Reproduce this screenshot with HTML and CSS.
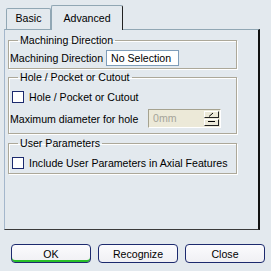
FILE: index.html
```html
<!DOCTYPE html>
<html>
<head>
<meta charset="utf-8">
<link rel="stylesheet" href="styles.css">
</head>
<body>
<div class="dialog">
  <div class="tabs">
    <div class="tab">Basic</div>
    <div class="tab active">Advanced</div>
  </div>
  <div class="panel">
    <fieldset class="group g1">
      <legend>Machining Direction</legend>
      <div class="row">
        <span class="label">Machining Direction</span>
        <span class="textbox">No Selection</span>
      </div>
    </fieldset>
    <fieldset class="group g2">
      <legend>Hole / Pocket or Cutout</legend>
      <label class="check"><span class="box"></span><span>Hole / Pocket or Cutout</span></label>
      <div class="row row-spin">
        <span class="label">Maximum diameter for hole</span>
        <span class="spin">
          <span class="spin-val">0mm</span>
          <span class="spin-btns">
            <span class="sbtn"><svg width="9" height="5" viewBox="0 0 9 5"><path d="M2 4.5 L6 1" stroke="#000" stroke-width="1"/></svg></span>
            <span class="sbtn"><svg width="9" height="5" viewBox="0 0 9 5"><path d="M1 1.5 H8" stroke="#000" stroke-width="1"/></svg></span>
          </span>
        </span>
      </div>
    </fieldset>
    <fieldset class="group g3">
      <legend>User Parameters</legend>
      <label class="check"><span class="box"></span><span>Include User Parameters in Axial Features</span></label>
    </fieldset>
  </div>
  <div class="buttons">
    <button class="btn default">OK</button>
    <button class="btn">Recognize</button>
    <button class="btn">Close</button>
  </div>
</div>
</body>
</html>
```
FILE: styles.css
```css
html, body {
  margin: 0;
  padding: 0;
  background: #e3e9ee;
}
body {
  width: 271px;
  height: 271px;
  overflow: hidden;
  font-family: "Liberation Sans", Arial, sans-serif;
  font-size: 10.6px;
  color: #000;
}
.dialog {
  padding: 5px 0 0 4px;
}
.tabs {
  display: flex;
  align-items: flex-end;
  padding-left: 2px;
  height: 24px;
  position: relative;
  z-index: 1;
}
.tab {
  box-sizing: border-box;
  height: 21px;
  width: 45px;
  border: 1px solid #91a7b4;
  border-bottom: none;
  border-radius: 2px 2px 0 0;
  text-align: center;
  line-height: 19px;
  background: #e3e9ee;
}
.tab.active {
  height: 25px;
  width: 72px;
  margin-bottom: -1px;
  border-right: 1px solid #222;
  line-height: 24px;
}
.panel {
  box-sizing: border-box;
  width: 256px;
  height: 201px;
  border-top: 1px solid #91a7b4;
  border-left: 1px solid #a4b7cc;
  border-right: 2px solid #111;
  border-bottom: 1px solid #3a3a3a;
  padding: 4px 0 0 3px;
}
.group {
  box-sizing: border-box;
  width: 229px;
  margin: 0 0 2px 0;
  padding: 0 0 0 1px;
  border: 1px solid #aca899;
  box-shadow: inset 1px 1px 0 #fff, 1px 1px 0 #fff;
  min-width: 0;
}
.group legend {
  padding: 0 2px;
  margin-left: 8px;
  line-height: 13px;
}
.g1 { height: 35px; }
.g2 { height: 63px; margin-top: 0; }
.g3 { height: 37px; margin-top: 3px; }
.row {
  display: flex;
  align-items: center;
  height: 16px;
  margin-top: 3px;
}
.label {
  width: 96px;
  white-space: nowrap;
}
.textbox {
  box-sizing: border-box;
  width: 73px;
  height: 16px;
  border: 1px solid #7f9db9;
  background: #fff;
  padding-left: 4px;
  line-height: 14px;
}
.check {
  display: flex;
  align-items: center;
  gap: 5px;
  margin-top: 7px;
  margin-left: 2px;
  white-space: nowrap;
}
.box {
  box-sizing: border-box;
  width: 12px;
  height: 12px;
  border: 1px solid #1c2a6e;
  background: #fff;
  flex: none;
}
.row-spin {
  height: 19px;
  margin-top: 6px;
}
.row-spin .label {
  width: 138px;
}
.spin {
  box-sizing: border-box;
  display: flex;
  width: 73px;
  height: 19px;
  border: 1px solid #a5a28f;
  border-right-color: #fff;
  border-bottom-color: #fff;
  background: #ece9d8;
  padding: 1px;
}
.spin-val {
  flex: 1;
  color: #a6a49a;
  padding-left: 3px;
  line-height: 15px;
}
.spin-btns {
  display: flex;
  flex-direction: column;
  width: 15px;
  gap: 1px;
}
.sbtn {
  flex: 1;
  box-sizing: border-box;
  border: 1px solid #222;
  border-top-color: #fff;
  border-left-color: #fff;
  background: #ece9d8;
  display: flex;
  align-items: center;
  justify-content: center;
}
.sbtn svg { display: block; }
.buttons {
  display: flex;
  gap: 7px;
  padding: 14px 0 0 7px;
}
.btn {
  box-sizing: border-box;
  width: 80px;
  height: 19px;
  border: 1px solid #1c2a6e;
  border-radius: 4px;
  background: linear-gradient(#fbfbfd, #f0f0f4);
  font-family: "Liberation Sans", Arial, sans-serif;
  font-size: 10.6px;
  color: #000;
  padding: 0;
}
.btn.default {
  box-shadow: inset 0 -2px 0 #28c028;
}
```
